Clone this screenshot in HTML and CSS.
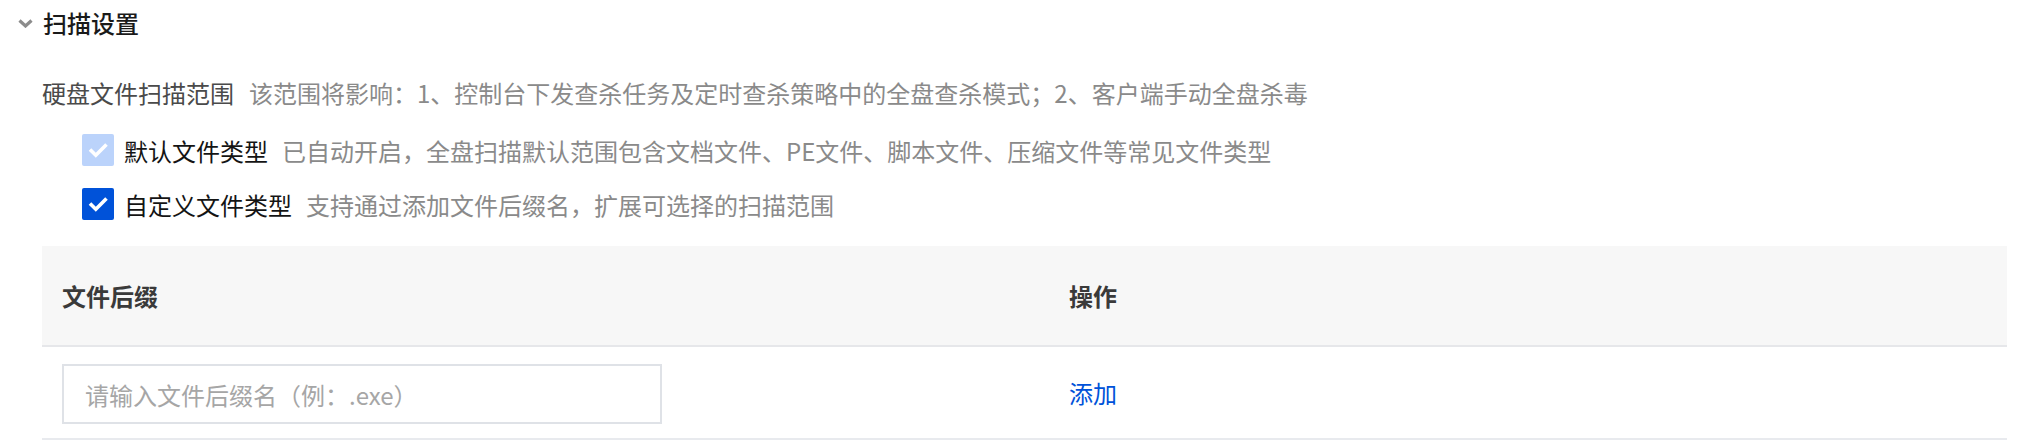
FILE: index.html
```html
<!DOCTYPE html>
<html lang="zh-CN">
<head>
<meta charset="utf-8">
<title>扫描设置</title>
<link rel="stylesheet" href="styles.css">
</head>
<body>
<section class="panel">
  <div class="panel-head">
    <svg class="chevron" width="15" height="9" viewBox="0 0 15 9"><path d="M1.5 1.5 L7.5 7 L13.5 1.5" fill="none" stroke="#8c8c8c" stroke-width="3.2"/></svg>
    <span class="panel-title">扫描设置</span>
  </div>
  <div class="panel-body">
    <div class="scope-row">
      <span class="scope-label">硬盘文件扫描范围</span>
      <span class="desc">该范围将影响：1、控制台下发查杀任务及定时查杀策略中的全盘查杀模式；2、客户端手动全盘杀毒</span>
    </div>
    <div class="check-row first">
      <span class="checkbox disabled"><svg width="32" height="32" viewBox="0 0 32 32"><path d="M8 15.5 L13.8 21.3 L24.5 10.5" fill="none" stroke="#fff" stroke-width="3.6"/></svg></span>
      <span class="check-label">默认文件类型</span>
      <span class="desc">已自动开启，全盘扫描默认范围包含文档文件、PE文件、脚本文件、压缩文件等常见文件类型</span>
    </div>
    <div class="check-row">
      <span class="checkbox checked"><svg width="32" height="32" viewBox="0 0 32 32"><path d="M8 15.5 L13.8 21.3 L24.5 10.5" fill="none" stroke="#fff" stroke-width="3.6"/></svg></span>
      <span class="check-label">自定义文件类型</span>
      <span class="desc">支持通过添加文件后缀名，扩展可选择的扫描范围</span>
    </div>
    <div class="table">
      <div class="th">文件后缀</div>
      <div class="th">操作</div>
      <div class="td input-cell"><input class="suffix-input" type="text" placeholder="请输入文件后缀名（例：.exe）"></div>
      <div class="td"><a class="link">添加</a></div>
    </div>
  </div>
</section>
</body>
</html>
```
FILE: styles.css
```css
html, body {
  margin: 0;
  padding: 0;
  background: #fff;
}
body {
  font-family: "Noto Sans CJK SC", "Noto Sans", sans-serif;
  font-size: 24px;
  color: #1a1a1a;
}
.panel-head {
  height: 46px;
  display: flex;
  align-items: center;
  padding-left: 18px;
}
.chevron {
  display: block;
  margin-right: 10px;
}
.panel-title {
  font-weight: 500;
  color: #1a1a1a;
  line-height: 32px;
}
.panel-body {
  padding-left: 42px;
}
.scope-row {
  margin-top: 28px;
  height: 36px;
  display: flex;
  align-items: center;
}
.scope-label {
  color: #4a4a4a;
  margin-right: 15px;
}
.desc {
  color: #8a8a8a;
}
.check-row {
  display: flex;
  align-items: center;
  height: 32px;
  margin-top: 22px;
  padding-left: 40px;
}
.check-row.first {
  margin-top: 24px;
}
.checkbox {
  width: 32px;
  height: 32px;
  border-radius: 2px;
  margin-right: 10px;
  display: block;
}
.checkbox svg {
  display: block;
}
.checkbox.disabled {
  background: #bbd3fb;
}
.checkbox.checked {
  background: #0052d9;
}
.check-label {
  color: #141414;
  margin-right: 14px;
}
.table {
  margin-top: 26px;
  width: 1965px;
  display: grid;
  grid-template-columns: 1007px 1fr;
}
.th {
  background: #f7f7f7;
  height: 99px;
  border-bottom: 2px solid #e6e7ea;
  display: flex;
  align-items: center;
  padding-left: 20px;
  font-weight: 600;
  color: #3a3a3a;
}
.td {
  height: 91px;
  border-bottom: 2px solid #e8eaee;
  display: flex;
  align-items: center;
  padding-left: 20px;
}
.input-cell {
  align-items: flex-start;
  padding-top: 17px;
  height: 74px;
}
.suffix-input {
  box-sizing: border-box;
  width: 600px;
  height: 60px;
  border: 2px solid #dfe2e7;
  border-radius: 0;
  padding: 0 21px;
  font-family: "Noto Sans CJK SC", sans-serif;
  font-size: 24px;
  color: #1a1a1a;
  outline: none;
  background: #fff;
}
.suffix-input::placeholder {
  color: #a6a6a6;
}
.link {
  color: #0052d9;
  text-decoration: none;
  cursor: pointer;
}
```
